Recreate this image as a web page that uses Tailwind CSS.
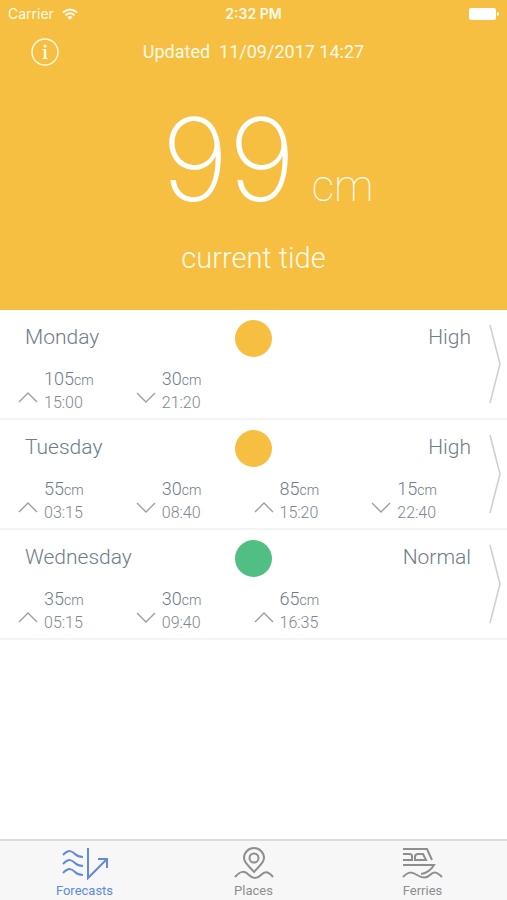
<!DOCTYPE html>
<html lang="en">
<head>
    <meta charset="UTF-8">
    <meta name="viewport" content="width=device-width, initial-scale=1.0">
    <title>Tide Forecasts</title>
    <script src="https://cdn.jsdelivr.net/npm/@tailwindcss/browser@4"></script>
</head>
<body class="min-h-screen flex flex-col bg-white font-[Roboto,sans-serif] font-light text-[#6f7c89]">

    <!-- Current tide -->
    <header class="bg-[#f6bf41] text-[#fffbe9] pb-8">
        <!-- Status bar -->
        <div class="grid grid-cols-3 items-center h-7 px-2 font-[Inter,sans-serif] text-sm font-normal">
            <div class="flex items-center gap-2">
                <span>Carrier</span>
                <svg class="w-4 h-3" viewBox="0 0 16 12" fill="none" stroke="currentColor" stroke-width="2">
                    <path d="M1 4.5Q8-1.5 15 4.5M3.5 7.2Q8 3.2 12.5 7.2"/>
                    <path d="M5.3 9Q8 6.8 10.7 9L8 11.8Z" fill="currentColor" stroke="none"/>
                </svg>
            </div>
            <span class="text-center font-semibold">2:32 PM</span>
            <svg class="w-8 h-3 justify-self-end" viewBox="0 0 32 12" fill="#fff">
                <rect x="2" y="0" width="27" height="12" rx="2"/>
                <path d="M30 4q2 .5 2 2t-2 2z"/>
            </svg>
        </div>

        <div class="grid grid-cols-[28px_1fr_28px] items-center px-[31px] pt-2.5">
            <button type="button" aria-label="Information">
                <svg class="w-7 h-7" viewBox="0 0 28 28" fill="none" stroke="currentColor" stroke-width="1.4">
                    <circle cx="14" cy="14" r="13"/>
                    <circle cx="14" cy="8" r="1.6" fill="currentColor" stroke="none"/>
                    <path d="M11.5 11.5h3v8.5M11.5 20.5h5.500" stroke-width="1.2"/>
                    <path d="M14 11.5v9" stroke-width="2.4"/>
                </svg>
            </button>
            <p class="text-center text-lg leading-7 font-normal whitespace-pre">Updated  11/09/2017 14:27</p>
        </div>

        <p class="flex items-baseline justify-center gap-4 pt-[34px] pl-7 leading-[120px] text-white">
            <span class="text-[115px] font-[Inter,sans-serif] font-extralight">99</span>
            <span class="text-[44px] leading-none font-thin">cm</span>
        </p>
        <p class="text-center text-[29px] leading-10 pt-[18px]">current tide</p>
    </header>

    <!-- Daily forecasts -->
    <main id="forecasts" class="grow"></main>

    <!-- Tabs -->
    <nav class="grid grid-cols-3 h-[61px] border-t-2 border-[#dcdcdc] bg-[#f7f7f7] text-[13px] leading-4 font-normal text-[#8e8e8e]">
        <a href="#forecasts" class="flex flex-col items-center pt-1.5 text-[#6289dd]">
            <svg class="w-12 h-9" viewBox="0 0 48 36" fill="none" stroke="currentColor" stroke-width="2">
                <path d="M2 8C8 2 11 4 14 7S19 10 22 10M2 17C8 11 11 13 14 16S19 19 22 19M2 26C8 20 11 22 14 25S19 28 22 28"/>
                <path d="M27 1v30L46 12M37 12h9v9"/>
            </svg>
            Forecasts
        </a>
        <a href="#places" class="flex flex-col items-center pt-1.5">
            <svg class="w-12 h-9" viewBox="0 0 48 36" fill="none" stroke="currentColor" stroke-width="2">
                <path d="M24 25C20 20 14 16 14 11a10 10 0 0 1 20 0C34 16 28 20 24 25Z"/>
                <circle cx="24" cy="11" r="4.5"/>
                <path d="M5 30C11 23 15 24 19 28S27 32 31 28S38 24 43 30"/>
            </svg>
            Places
        </a>
        <a href="#ferries" class="flex flex-col items-center pt-1.5">
            <svg class="w-12 h-9" viewBox="0 0 48 36" fill="none" stroke="currentColor" stroke-width="2">
                <path d="M4 2h24l5 11M4 7h6q3 0 3 2v4H4M16 13v-3q0-3 3-3h5l3 6z"/>
                <path d="M4 18h31C32 23 29 26 22 27"/>
                <path d="M4 30C10 24 13 25 18 28S27 32 31 28S38 25 43 30"/>
            </svg>
            Ferries
        </a>
    </nav>

<script>
    const forecasts = [
        { day: 'Monday', level: 'High', tides: [['up', 105, '15:00'], ['down', 30, '21:20']] },
        { day: 'Tuesday', level: 'High', tides: [['up', 55, '03:15'], ['down', 30, '08:40'], ['up', 85, '15:20'], ['down', 15, '22:40']] },
        { day: 'Wednesday', level: 'Normal', tides: [['up', 35, '05:15'], ['down', 30, '09:40'], ['up', 65, '16:35']] }
    ];

    const dots = { High: 'bg-[#f6bf41]', Normal: 'bg-[#51be83]' };
    const arrows = { up: 'M1 11L10 2L19 11', down: 'M1 2L10 11L19 2' };

    // One row per day, with its high and low waters
    document.getElementById('forecasts').innerHTML = forecasts.map(f => `
        <a href="#${f.day}" class="flex items-center border-b-2 border-[#f3f4f4] pr-1.5">
            <div class="grow">
                <div class="grid grid-cols-[1fr_37px_1fr] pt-2.5 -mr-[18px]">
                    <span class="text-[21px] leading-[34px] pl-[25px]">${f.day}</span>
                    <span class="size-[37px] rounded-full ${dots[f.level]}"></span>
                    <span class="text-[21px] leading-[34px] text-right pr-9">${f.level}</span>
                </div>
                <div class="grid grid-cols-4 pt-2.5 pb-[3px] pl-[18px]">
                    ${f.tides.map(([dir, height, time]) => `
                    <div class="flex items-end gap-1.5">
                        <svg class="w-5 h-3 mb-3" viewBox="0 0 20 12" fill="none" stroke="#9a9fa3" stroke-width="1.4"><path d="${arrows[dir]}"/></svg>
                        <div>
                            <p class="text-lg leading-6">${height}<span class="text-sm">cm</span></p>
                            <p class="text-base leading-6 text-[#7d8790]">${time}</p>
                        </div>
                    </div>`).join('')}
                </div>
            </div>
            <svg class="w-3 h-20 shrink-0" viewBox="0 0 12 80" fill="none" stroke="#cdd1d1" stroke-width="1.6"><path d="M1 1L11 40L1 79"/></svg>
        </a>
    `).join('');
</script>

</body>
</html>
